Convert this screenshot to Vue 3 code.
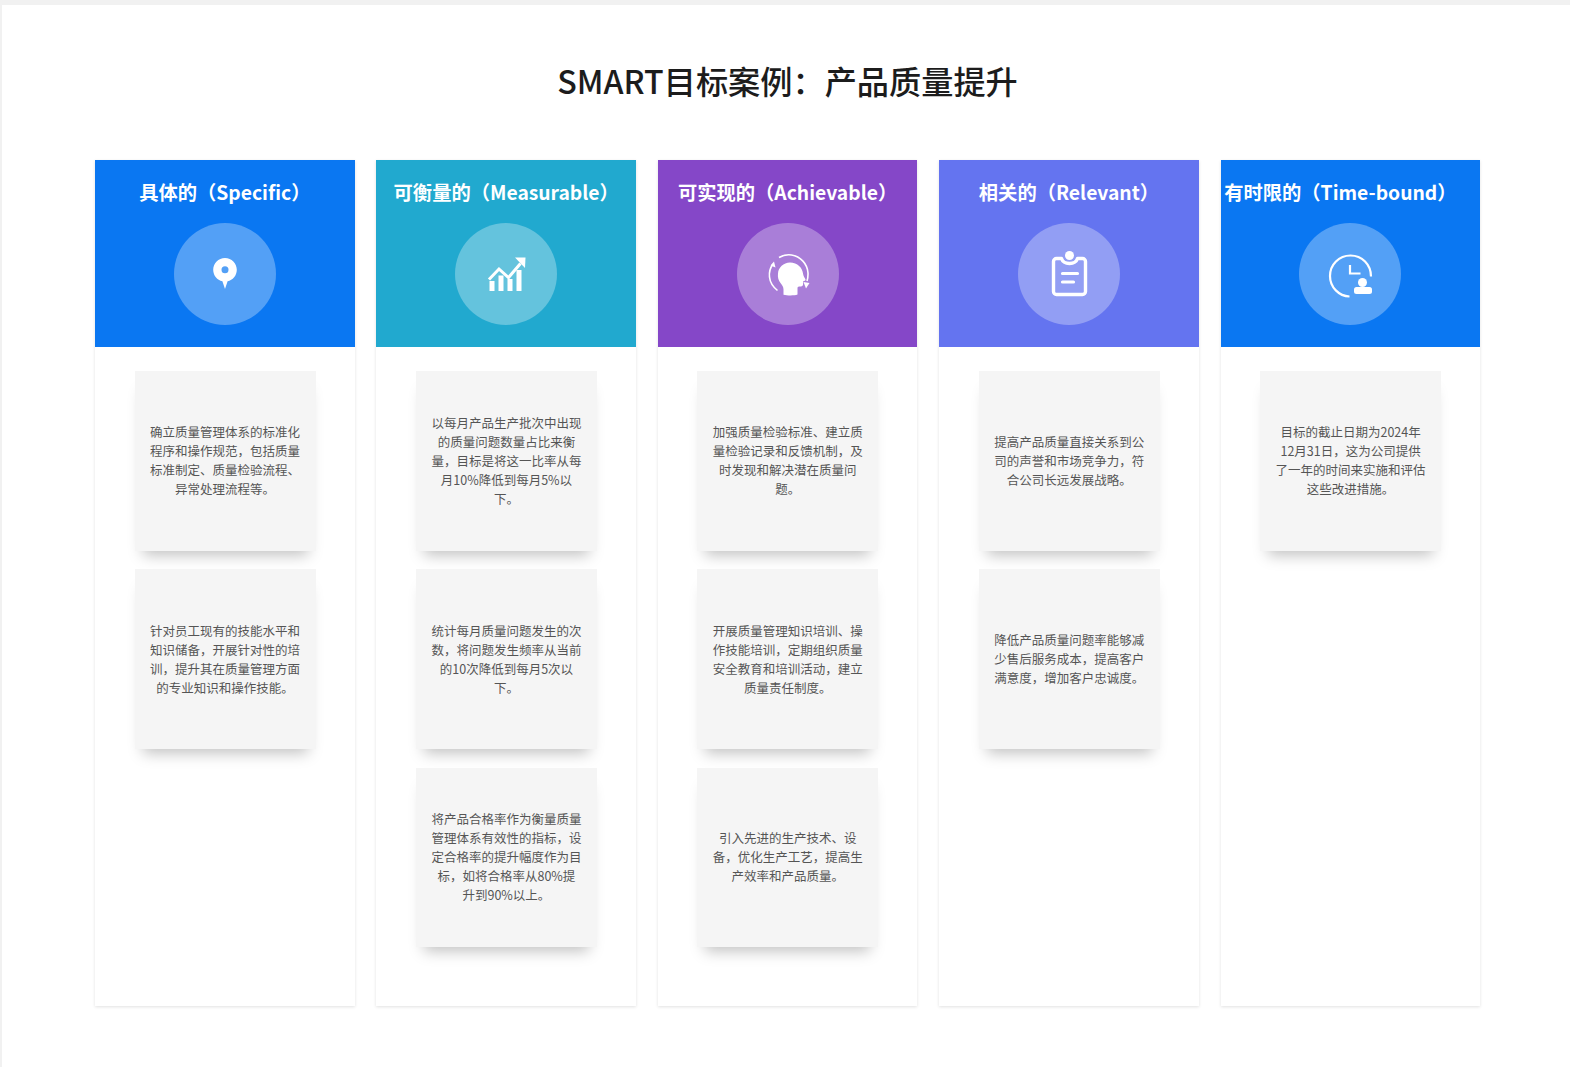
<script setup>
const columns = [
  { key: 'specific', title: '具体的（Specific）', color: 'blue', cards: [
    '确立质量管理体系的标准化程序和操作规范，包括质量标准制定、质量检验流程、异常处理流程等。',
    '针对员工现有的技能水平和知识储备，开展针对性的培训，提升其在质量管理方面的专业知识和操作技能。'
  ]},
  { key: 'measurable', title: '可衡量的（Measurable）', color: 'teal', cards: [
    '以每月产品生产批次中出现的质量问题数量占比来衡量，目标是将这一比率从每月10%降低到每月5%以下。',
    '统计每月质量问题发生的次数，将问题发生频率从当前的10次降低到每月5次以下。',
    '将产品合格率作为衡量质量管理体系有效性的指标，设定合格率的提升幅度作为目标，如将合格率从80%提升到90%以上。'
  ]},
  { key: 'achievable', title: '可实现的（Achievable）', color: 'purple', cards: [
    '加强质量检验标准、建立质量检验记录和反馈机制，及时发现和解决潜在质量问题。',
    '开展质量管理知识培训、操作技能培训，定期组织质量安全教育和培训活动，建立质量责任制度。',
    '引入先进的生产技术、设备，优化生产工艺，提高生产效率和产品质量。'
  ]},
  { key: 'relevant', title: '相关的（Relevant）', color: 'indigo', cards: [
    '提高产品质量直接关系到公司的声誉和市场竞争力，符合公司长远发展战略。',
    '降低产品质量问题率能够减少售后服务成本，提高客户满意度，增加客户忠诚度。'
  ]},
  { key: 'time', title: '有时限的（Time-bound）', color: 'blue', cards: [
    '目标的截止日期为2024年12月31日，这为公司提供了一年的时间来实施和评估这些改进措施。'
  ]}
]
</script>

<template>
  <div class="page">
    <main class="panel">
      <h1 class="title">SMART目标案例：产品质量提升</h1>
      <section class="columns">
        <article v-for="col in columns" :key="col.key" class="col">
          <header class="head" :class="col.color">
            <h2 class="head-title" :class="{ shifted: col.key === 'time' }">{{ col.title }}</h2>
            <div class="circle">
              <svg v-if="col.key === 'specific'" viewBox="0 -1 70 70" class="icon">
                <path fill="#fff" fill-rule="evenodd" d="M35 18c6.6 0 11.8 5.2 11.8 11.8 0 5.8-4 10.400-9.200 11.500L35 49l-2.600-7.700C27.200 40.200 23.200 35.600 23.200 29.800 23.200 23.200 28.400 18 35 18zM35 26.300a3.500 3.500 0 1 0 0 7 3.500 3.500 0 0 0 0-7z"/>
              </svg>
              <svg v-else-if="col.key === 'measurable'" viewBox="0.500 -1 70 70" class="icon">
                <path fill="#fff" d="M19 41h5v10h-5zM28 35.500h5V51h-5zM37 39h5v12h-5zM46 30h5v21h-5z"/>
                <path fill="none" stroke="#fff" stroke-width="3" d="M18.500 39.500 28.500 29l9.500 8.500L50 23.500"/>
                <path fill="#fff" d="M44.500 17.500H55L54.500 28z"/>
              </svg>
              <svg v-else-if="col.key === 'achievable'" viewBox="0 -1 70 70" class="icon">
                <path fill="#fff" d="M37 22.500c7.500 0 12.500 5.500 13 11 .2 2.500 2 4.500 2.500 6 .3 1-1.200 1.500-2.500 2 .3 1.500.2 3-.3 4-.5 1-2 1.200-3.500 1-1.400 0-1.700.8-1.700 2v6c-3 1.200-10 1.200-14 .2v-5.200c0-3-1.500-4.500-3-6.500-2-2.500-3-5.500-2.500-9.500C25.300 27.500 30.500 22.500 37 22.500z"/>
                <path fill="none" stroke="#fff" stroke-width="1.600" d="M26 17.500c3.500-2 8-3.200 12.500-2.500 9 1.300 16 9 16.500 18 .1 3-.2 5.500-1 8"/>
                <path fill="#fff" d="M50.500 42l6 1-3.500 5.500z"/>
                <path fill="none" stroke="#fff" stroke-width="1.600" d="M20 24c-3 4-4 8.500-3.500 13 .5 5 3 9.500 8 13.500"/>
                <path fill="#fff" d="M21 21.500l1.500 6-5-2z"/>
              </svg>
              <svg v-else-if="col.key === 'relevant'" viewBox="0.500 -1 70 70" class="icon">
                <path fill="none" stroke="#fff" stroke-width="3.400" stroke-linejoin="round" d="M28 18.500h-5a3 3 0 0 0-3 3V51.500a3 3 0 0 0 3 3H49a3 3 0 0 0 3-3V21.500a3 3 0 0 0-3-3h-5c-1 3-4 5-8 5s-7-2-8-5z"/>
                <circle cx="36" cy="15.500" r="4.500" fill="#fff"/>
                <path fill="none" stroke="#fff" stroke-width="3.200" stroke-linecap="round" d="M29 33.500h15M29 42h11"/>
              </svg>
              <svg v-else viewBox="1 -1 70 70" class="icon">
                <path fill="none" stroke="#fff" stroke-width="2.200" d="M57 36.500C57 24.500 48 15.500 36.500 15.500 25 15.500 16 24.500 16 36c0 11.500 9 20 19.500 20.500"/>
                <path fill="none" stroke="#fff" stroke-width="2.200" d="M36 25v8.500h10.500"/>
                <circle cx="48.500" cy="42.500" r="4.500" fill="#fff"/>
                <rect x="40" y="47" width="18" height="7" rx="2.500" fill="#fff"/>
              </svg>
            </div>
          </header>
          <div class="body">
            <div v-for="(text, i) in col.cards" :key="i" class="card">
              <p class="card-text">{{ text }}</p>
            </div>
          </div>
        </article>
      </section>
    </main>
  </div>
</template>

<style>
html, body { margin: 0; background: #f1f1f1; }
</style>

<style scoped>
.page {
  height: 1067px;
  box-sizing: border-box;
  padding: 5px 0 0 2px;
  background: #f1f1f1;
  font-family: "Noto Sans CJK SC", "Noto Sans", sans-serif;
  overflow: hidden;
}
.panel {
  height: 1062px;
  background: #fff;
  padding: 0 80px 0 93px;
  box-sizing: border-box;
}
.title {
  margin: 0;
  height: 155px;
  box-sizing: border-box;
  padding: 0 10px 6px 0;
  display: flex;
  align-items: center;
  justify-content: center;
  font-size: 32.200px;
  font-weight: 500;
  color: #1c1c1c;
}
.columns {
  display: grid;
  grid-template-columns: repeat(5, 259.600px);
  column-gap: 21.800px;
}
.col {
  height: 846px;
  background: #fff;
  box-shadow: 0 1px 3px rgba(0, 0, 0, 0.12);
}
.head {
  height: 187px;
  display: flex;
  flex-direction: column;
  align-items: center;
  color: #fff;
}
.blue { background: #0a77f2; }
.teal { background: #21a9cf; }
.purple { background: #8547c8; }
.indigo { background: #6474f0; }
.head-title {
  margin: 0;
  height: 63px;
  line-height: 64px;
  font-size: 19.300px;
  font-weight: 700;
  white-space: nowrap;
}
.shifted { margin-right: 20px; }
.circle {
  width: 102px;
  height: 102px;
  border-radius: 50%;
  background: rgba(255, 255, 255, 0.3);
  display: flex;
  align-items: center;
  justify-content: center;
}
.icon { width: 70px; height: 70px; display: block; }
.body {
  padding: 24px 39px 0 39.500px;
  display: flex;
  flex-direction: column;
  gap: 18.600px;
}
.card {
  height: 179.700px;
  box-sizing: border-box;
  padding: 0 15.500px 1px;
  background: #f5f5f5;
  display: flex;
  align-items: center;
  box-shadow: 0 12px 14px -8px rgba(0, 0, 0, 0.25);
}
.card-text {
  margin: 0;
  width: 100%;
  text-align: center;
  font-size: 12.500px;
  line-height: 19px;
  color: #555;
}
</style>
